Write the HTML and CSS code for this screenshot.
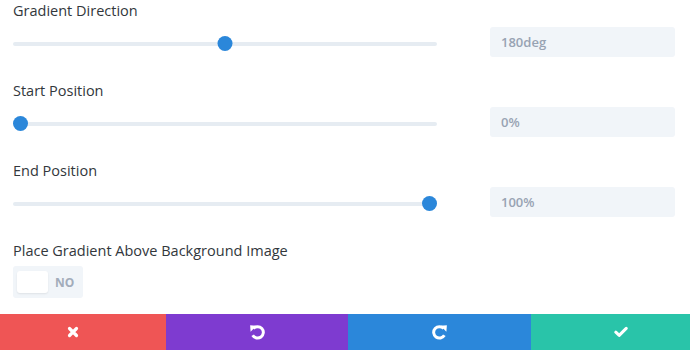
FILE: index.html
```html
<!DOCTYPE html>
<html lang="en">
<head>
    <meta charset="UTF-8">
    <title>Gradient Settings</title>
    <link rel="stylesheet" href="styles.css">
</head>
<body>
    <div class="settings">
        <div class="field">
            <label class="field-label">Gradient Direction</label>
            <div class="control">
                <div class="slider">
                    <div class="track"></div>
                    <div class="thumb" style="left: 50%"></div>
                </div>
                <div class="value">180deg</div>
            </div>
        </div>

        <div class="field">
            <label class="field-label">Start Position</label>
            <div class="control">
                <div class="slider">
                    <div class="track"></div>
                    <div class="thumb" style="left: 0%"></div>
                </div>
                <div class="value">0%</div>
            </div>
        </div>

        <div class="field">
            <label class="field-label">End Position</label>
            <div class="control">
                <div class="slider">
                    <div class="track"></div>
                    <div class="thumb" style="left: 100%"></div>
                </div>
                <div class="value">100%</div>
            </div>
        </div>

        <div class="field last">
            <label class="field-label">Place Gradient Above Background Image</label>
            <div class="toggle">
                <span class="knob"></span>
                <span class="toggle-text">NO</span>
            </div>
        </div>
    </div>

    <div class="actions">
        <button class="action cancel" title="Cancel">
            <svg width="12" height="12" viewBox="0 0 12 12"><path d="M2.5 2.5 L9.5 9.5 M9.5 2.5 L2.5 9.5" stroke="#fff" stroke-width="3.2" stroke-linecap="round" fill="none"/></svg>
        </button>
        <button class="action undo" title="Undo">
            <svg width="16" height="16" viewBox="0 0 14 14"><path d="M3.8 4 A5 5 0 1 1 3.2 9.8" stroke="#fff" stroke-width="2.6" fill="none"/><path d="M1 1.2 L6.6 1.6 L1.4 6.8 Z" fill="#fff"/></svg>
        </button>
        <button class="action redo" title="Redo">
            <svg width="16" height="16" viewBox="0 0 14 14"><path d="M10.2 4 A5 5 0 1 0 10.8 9.8" stroke="#fff" stroke-width="2.6" fill="none"/><path d="M13 1.2 L7.4 1.6 L12.6 6.8 Z" fill="#fff"/></svg>
        </button>
        <button class="action save" title="Save">
            <svg width="14" height="12" viewBox="0 0 14 12"><path d="M1.8 6.2 L5.2 9.4 L12.2 2.4" stroke="#fff" stroke-width="3" stroke-linecap="round" stroke-linejoin="round" fill="none"/></svg>
        </button>
    </div>
</body>
</html>
```

FILE: styles.css
```css
html, body {
    margin: 0;
    padding: 0;
    background: #fff;
}
body {
    font-family: "Open Sans", "Liberation Sans", sans-serif;
    width: 690px;
    height: 350px;
    overflow: hidden;
}
.settings {
    padding: 0 15px 0 13px;
}
.field {
    margin-bottom: 23px;
}
.field.last {
    margin-bottom: 16px;
}
.field-label {
    display: block;
    font-size: 14.5px;
    line-height: 22px;
    color: #32373c;
}
.control {
    display: flex;
    align-items: center;
    gap: 53px;
    margin-top: 5px;
    height: 30px;
}
.slider {
    position: relative;
    width: 424px;
    height: 15px;
    margin-top: 2px;
}
.track {
    position: absolute;
    left: 0;
    right: 0;
    top: 6px;
    height: 4px;
    border-radius: 2px;
    background: #e6ecf2;
}
.thumb {
    position: absolute;
    top: 0;
    width: 15px;
    height: 15px;
    border-radius: 50%;
    background: #2b87da;
    transform: translateX(calc(-1 * var(--p, 0%)));
}
.slider .thumb[style*="left: 50%"] { --p: 50%; }
.slider .thumb[style*="left: 100%"] { --p: 100%; }
.value {
    box-sizing: border-box;
    width: 185px;
    height: 30px;
    padding: 0 11px;
    border-radius: 3px;
    background: #f1f5f9;
    color: #98a3b3;
    font-size: 13px;
    font-weight: 600;
    line-height: 30px;
}
.toggle {
    display: inline-flex;
    align-items: center;
    box-sizing: border-box;
    width: 70px;
    height: 32px;
    margin-top: 4px;
    padding: 0 4px;
    border-radius: 3px;
    background: #f1f5f9;
}
.knob {
    width: 31px;
    height: 22px;
    border-radius: 3px;
    background: #fff;
    box-shadow: 0 1px 2px rgba(0,0,0,0.08);
}
.toggle-text {
    margin-left: 7px;
    font-size: 12px;
    font-weight: 700;
    color: #a2acba;
}
.actions {
    display: grid;
    grid-template-columns: 166px 182px 183px 1fr;
    height: 36px;
}
.action {
    display: flex;
    align-items: center;
    justify-content: center;
    border: none;
    padding: 0;
    margin: 0;
    cursor: pointer;
}
.cancel { background: #ef5555; padding-right: 20px; }
.undo { background: #7e3bd0; }
.redo { background: #2b87da; }
.save { background: #29c4a9; padding-left: 21px; }
```
